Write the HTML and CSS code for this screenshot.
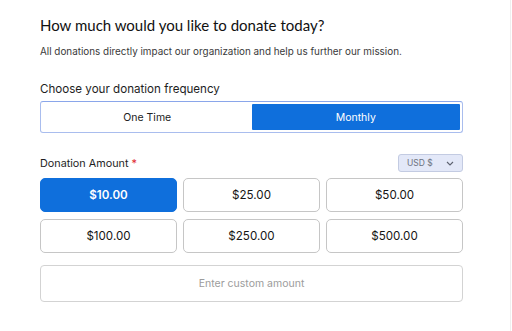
FILE: index.html
```html
<!DOCTYPE html>
<html lang="en">
<head>
    <meta charset="UTF-8">
    <meta name="viewport" content="width=device-width, initial-scale=1.0">
    <title>Donate</title>
    <link rel="stylesheet" href="styles.css">
</head>
<body>
    <div class="page">
        <div class="donate-form">
            <h1>How much would you like to donate today?</h1>
            <p class="intro">All donations directly impact our organization and help us further our mission.</p>

            <div class="field-label">Choose your donation frequency</div>
            <div class="frequency">
                <button class="freq-option">One Time</button>
                <button class="freq-option active">Monthly</button>
            </div>

            <div class="amount-header">
                <span class="field-label">Donation Amount <span class="required">*</span></span>
                <div class="currency">
                    <span>USD $</span>
                    <svg width="8" height="5" viewBox="0 0 8 5"><path d="M1 1l3 3 3-3" fill="none" stroke="#5d6270" stroke-width="1.1"/></svg>
                </div>
            </div>

            <div class="amounts">
                <button class="amount selected">$10.00</button>
                <button class="amount">$25.00</button>
                <button class="amount">$50.00</button>
                <button class="amount">$100.00</button>
                <button class="amount">$250.00</button>
                <button class="amount">$500.00</button>
            </div>

            <input type="text" class="custom-amount" placeholder="Enter custom amount">
        </div>
    </div>
</body>
</html>
```

FILE: styles.css
```css
body {
    margin: 0;
    font-family: Inter, "Noto Sans", sans-serif;
    background-color: #ffffff;
    color: #1b1b1b;
}
.page {
    width: 510px;
    height: 331px;
    border-right: 1px solid #efefef;
}
.donate-form {
    width: 423px;
    padding: 16px 0 0 40px;
}
h1 {
    font-family: Lato, sans-serif;
    font-weight: 400;
    font-size: 15px;
    line-height: 18px;
    margin: 0;
    color: #111111;
}
.intro {
    font-size: 9.9px;
    line-height: 14px;
    margin: 10px 0 0;
    color: #3a3a3a;
}
.field-label {
    display: block;
    font-size: 11.6px;
    line-height: 14px;
    margin-top: 24px;
    color: #1e1e1e;
}
.frequency {
    display: flex;
    margin-top: 5px;
    padding: 2px;
    height: 26px;
    border: 1px solid #a9bdee;
    border-top-color: #8aa6ea;
    border-radius: 3px;
}
.freq-option {
    flex: 1;
    border: none;
    background: #ffffff;
    font-family: Inter, sans-serif;
    font-size: 10.5px;
    color: #222222;
    padding: 0;
}
.freq-option.active {
    background-color: #0f6fdc;
    color: #ffffff;
    border-radius: 1px;
}
.amount-header {
    display: flex;
    justify-content: space-between;
    align-items: center;
    margin-top: 21px;
    height: 18px;
}
.amount-header .field-label {
    margin-top: 2px;
    font-size: 10.8px;
}
.required {
    color: #e0282d;
}
.currency {
    display: flex;
    align-items: center;
    justify-content: space-between;
    box-sizing: border-box;
    width: 65px;
    height: 18px;
    padding: 0 8px 0 8px;
    background-color: #e3e8f8;
    border: 1px solid #c3cbe2;
    border-radius: 3px;
    font-size: 8.5px;
    color: #6d7280;
}
.amounts {
    display: grid;
    grid-template-columns: repeat(3, 1fr);
    column-gap: 6px;
    row-gap: 7px;
    margin-top: 6px;
}
.amount {
    height: 34px;
    background: #ffffff;
    border: 1px solid #c6c6c6;
    border-radius: 5px;
    font-family: Inter, sans-serif;
    font-size: 11.6px;
    color: #151515;
    padding: 0;
}
.amount.selected {
    background-color: #0f6fdc;
    border-color: #0f6fdc;
    color: #ffffff;
    font-weight: 600;
}
.custom-amount {
    display: block;
    box-sizing: border-box;
    width: 100%;
    height: 37px;
    margin-top: 12px;
    border: 1px solid #d3d3d3;
    border-radius: 4px;
    font-family: Inter, sans-serif;
    font-size: 10.5px;
    text-align: center;
}
.custom-amount::placeholder {
    color: #9c9c9c;
}
```
